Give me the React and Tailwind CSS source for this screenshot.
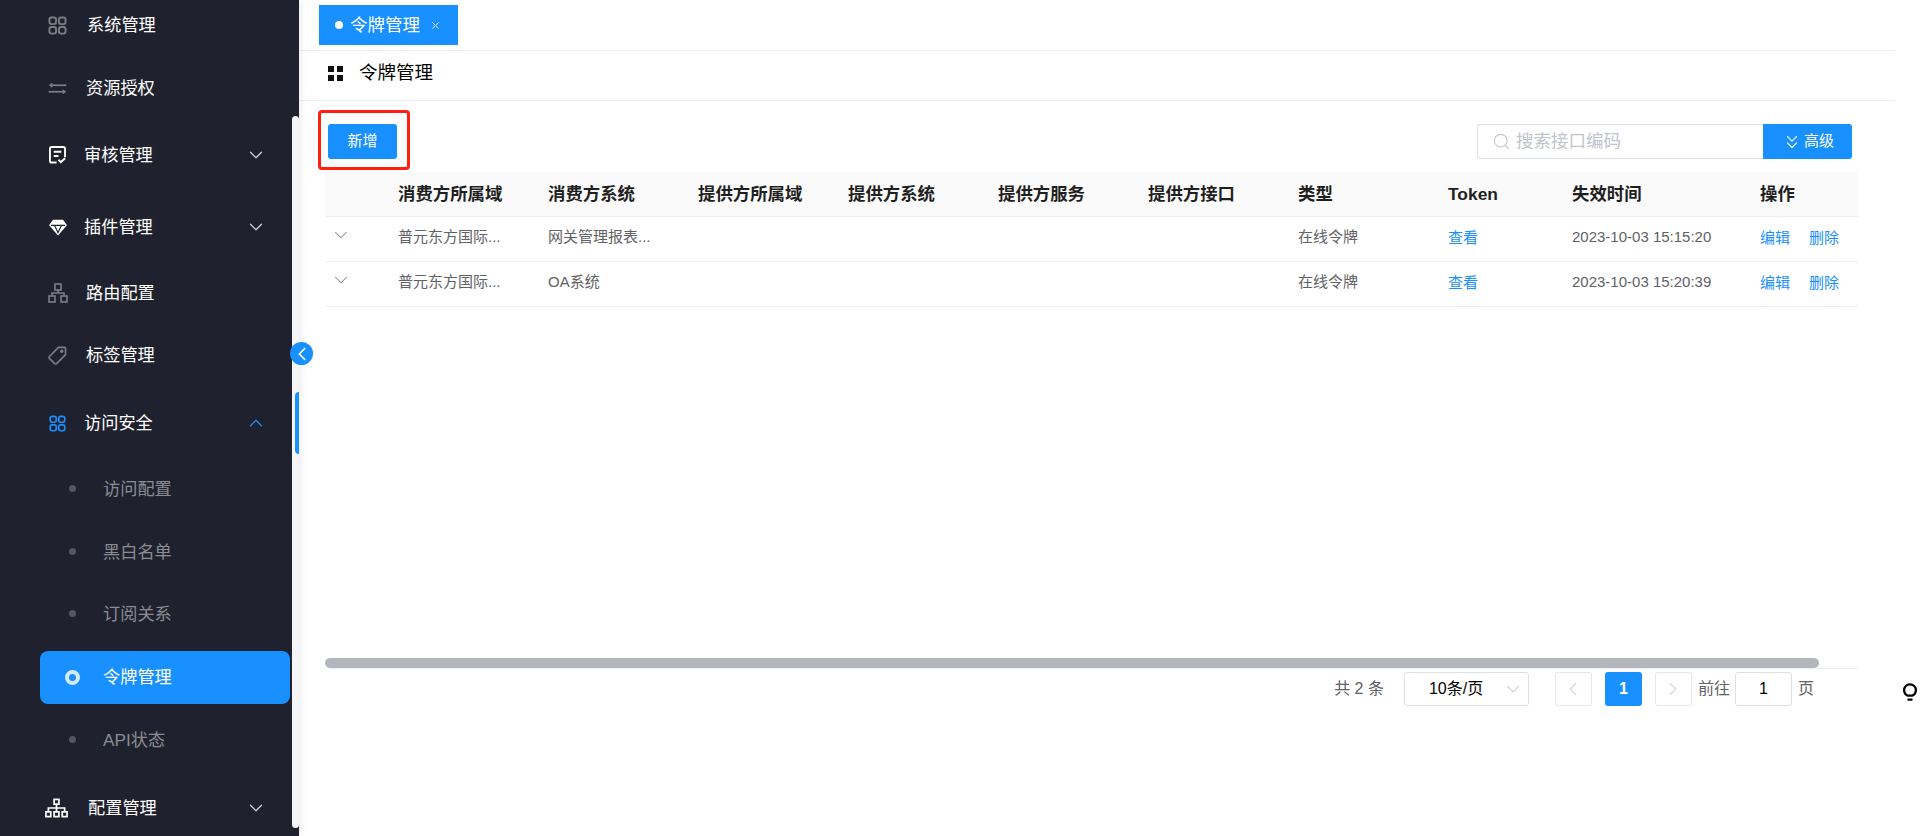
import { ChevronDown, ChevronLeft, ChevronRight, ChevronUp, ChevronsDown, Search, X } from 'lucide-react';

const font = { fontFamily: '"Liberation Sans", "Noto Sans CJK SC", sans-serif' };

const GridIcon = ({ className }) => (
  <svg viewBox="0 0 20 20" className={className} fill="none" stroke="currentColor" strokeWidth="2">
    <rect x="1.5" y="1.5" width="7" height="7" rx="2.2" />
    <rect x="11.5" y="1.5" width="7" height="7" rx="2.2" />
    <rect x="1.5" y="11.5" width="7" height="7" rx="2.2" />
    <rect x="11.5" y="11.5" width="7" height="7" rx="2.2" />
  </svg>
);

const SwapIcon = ({ className }) => (
  <svg viewBox="0 0 20 14" className={className} fill="currentColor">
    <rect x="3" y="2.6" width="16.5" height="1.8" />
    <path d="M0.5 3.5L4.5 0.8V6.2z" />
    <rect x="0.5" y="9.6" width="16.5" height="1.8" />
    <path d="M19.5 10.5L15.5 7.8V13.2z" />
  </svg>
);

const AuditIcon = ({ className }) => (
  <svg viewBox="0 0 18 19" className={className} fill="none" stroke="currentColor" strokeWidth="2">
    <path d="M8 17.5H3a2 2 0 0 1-2-2V3a2 2 0 0 1 2-2h12a2 2 0 0 1 2 2v9" />
    <path d="M5 6h8M5 10.5h5" />
    <path d="M10 14.5l2.5 2.5 4.5-4" />
  </svg>
);

const DiamondIcon = ({ className }) => (
  <svg viewBox="0 0 18 17" className={className}>
    <path d="M4 .8h10l4 5.4L9 16.4 0 6.2z" fill="currentColor" />
    <path d="M2 6.4h14M5.6 6.4L9 13.6l3.4-7.2" fill="none" stroke="#1f222e" strokeWidth="1.1" />
  </svg>
);

const TreeIcon = ({ className }) => (
  <svg viewBox="0 0 20 20" className={className} fill="none" stroke="currentColor" strokeWidth="1.6">
    <rect x="7" y="1" width="6" height="6" />
    <rect x="1" y="13" width="6" height="6" />
    <rect x="13" y="13" width="6" height="6" />
    <path d="M10 7v3M4 13v-3h12v3" />
  </svg>
);

const TagIcon = ({ className }) => (
  <svg viewBox="0 0 20 20" className={className} fill="none" stroke="currentColor" strokeWidth="1.7">
    <path d="M18.5 3v6L9 18.5a1.5 1.5 0 0 1-2 0L1.5 13a1.5 1.5 0 0 1 0-2L11 1.5h6A1.5 1.5 0 0 1 18.5 3z" />
    <circle cx="14.5" cy="5.5" r="1" />
  </svg>
);

const OrgIcon = ({ className }) => (
  <svg viewBox="0 0 24 20" className={className} fill="none" stroke="currentColor" strokeWidth="1.8">
    <rect x="9.5" y="1" width="5" height="5" />
    <rect x="1" y="14" width="5" height="5" />
    <rect x="9.5" y="14" width="5" height="5" />
    <rect x="18" y="14" width="5" height="5" />
    <path d="M12 6v8M3.5 14v-4h17v4" />
  </svg>
);

const BulbIcon = ({ className }) => (
  <svg viewBox="0 0 14 18" className={className} fill="none" stroke="currentColor" strokeWidth="2.2">
    <path d="M4.5 12.6C2.4 11.6 1.1 9.6 1.1 7.2a5.9 5.9 0 0 1 11.8 0c0 2.4-1.3 4.4-3.4 5.4z" />
    <path d="M4.5 16.6h5" />
  </svg>
);

const menu = [
  { label: '系统管理', icon: <GridIcon className="w-[19px] h-[19px] text-[#7c7e85]" />, rowCls: '-mt-[6px]', textCls: 'ml-[19px]' },
  { label: '资源授权', icon: <SwapIcon className="w-[19px] h-[13px] text-[#7c7e85]" />, rowCls: 'mt-[1px]', textCls: 'ml-[18px]' },
  { label: '审核管理', icon: <AuditIcon className="w-[17px] h-[18px] text-white" />, rowCls: 'mt-[5px]', textCls: 'ml-[16px]', arrow: 'down' },
  { label: '插件管理', icon: <DiamondIcon className="w-[18px] h-[17px] text-white" />, rowCls: 'mt-[10px]', textCls: 'ml-[16px]', arrow: 'down' },
  { label: '路由配置', icon: <TreeIcon className="w-[20px] h-[20px] text-[#7c7e85]" />, rowCls: 'mt-[4px]', textCls: 'ml-[18px]' },
  { label: '标签管理', icon: <TagIcon className="w-[19px] h-[19px] text-[#7c7e85]" />, rowCls: '', textCls: 'ml-[18px]' },
  { label: '访问安全', icon: <GridIcon className="w-[17px] h-[17px] text-[#1890ff]" />, rowCls: 'mt-[6px]', textCls: 'ml-[16px]', arrow: 'up' },
];

const subMenu = [
  { label: '访问配置', rowCls: 'mt-[4px]' },
  { label: '黑白名单', rowCls: 'mt-[1px]' },
  { label: '订阅关系', rowCls: '' },
  { label: '令牌管理', rowCls: 'mt-[1px]', active: true },
  { label: 'API状态', rowCls: 'mt-[1px]' },
];

const columns = ['消费方所属域', '消费方系统', '提供方所属域', '提供方系统', '提供方服务', '提供方接口', '类型', 'Token', '失效时间', '操作'];

const rows = [
  { owner: '普元东方国际...', system: '网关管理报表...', time: '2023-10-03 15:15:20' },
  { owner: '普元东方国际...', system: 'OA系统', time: '2023-10-03 15:20:39' },
];

const MenuRow = ({ item }) => (
  <div className={`flex items-center h-[62px] shrink-0 pl-[47px] text-[17.2px] text-white ${item.rowCls}`}>
    <div className="w-[21px] flex items-center justify-center shrink-0">{item.icon}</div>
    <span className={`${item.textCls} pt-[1px] whitespace-nowrap`}>{item.label}</span>
    {item.arrow === 'down' && <ChevronDown className="ml-auto mr-[32px] text-[#d7d8db]" size={22} strokeWidth={1.3} />}
    {item.arrow === 'up' && <ChevronUp className="ml-auto mr-[32px] text-[#1890ff]" size={22} strokeWidth={1.3} />}
  </div>
);

const SubRow = ({ item }) => (
  <div className={`flex items-center h-[62px] shrink-0 ${item.rowCls}`}>
    {item.active ? (
      <div className="ml-[40px] w-[250px] h-[53px] rounded-lg bg-[#1890ff] flex items-center text-[17.2px] text-white">
        <div className="ml-[25px] w-[15px] h-[15px] rounded-full border-[4px] border-[#d6eaff]" />
        <span className="ml-[23px] pt-[1px]">{item.label}</span>
      </div>
    ) : (
      <div className="flex items-center text-[17.2px] text-[#8b8d93]">
        <div className="ml-[69px] w-[7px] h-[7px] rounded-full bg-[#55565e]" />
        <span className="ml-[27px] pt-[1px]">{item.label}</span>
      </div>
    )}
  </div>
);

const Sidebar = () => (
  <aside className="relative w-[299px] shrink-0 h-full bg-[#1f222e] shadow-[2px_0_6px_rgba(0,0,0,0.08)] z-10">
    <div className="flex flex-col h-full overflow-hidden">
      {menu.map((item) => <MenuRow key={item.label} item={item} />)}
      {subMenu.map((item) => <SubRow key={item.label} item={item} />)}
      <MenuRow item={{ label: '配置管理', icon: <OrgIcon className="w-[24px] h-[20px] -ml-[2px] text-white" />, rowCls: 'mt-[6px]', textCls: 'ml-[20px]', arrow: 'down' }} />
    </div>
    {/* overlay scrollbar + collapse button */}
    <div className="absolute left-[292px] top-[116px] w-[7px] h-[712px] rounded-t-md rounded-b-md bg-[#f5f5f7]" />
    <div className="absolute left-[295px] top-[392px] w-[4px] h-[62px] rounded-l-md bg-[#1890ff]" />
    <div className="absolute left-[290px] top-[342px] w-[23px] h-[23px] rounded-full bg-[#1890ff] flex items-center justify-center">
      <ChevronLeft className="text-white" size={22} strokeWidth={1.8} />
    </div>
  </aside>
);

const Toolbar = () => (
  <div className="relative flex items-start justify-between h-[71px] pt-[23px] pl-[29px] pr-[43px]">
    <button className="w-[69px] h-[35px] rounded-[3px] bg-[#1890ff] text-white text-[15px]">新增</button>
    {/* red annotation around the button */}
    <div className="absolute left-[19px] top-[9px] w-[92px] h-[60px] rounded-[4px] border-[3px] border-[#fe1f10]" />
    <div className="flex h-[35px]">
      <div className="w-[286px] flex items-center pl-[14px] border border-r-0 border-[#dcdfe6] rounded-l-[3px] text-[#c0c4cc]">
        <Search size={19} strokeWidth={1.3} />
        <span className="ml-[5px] text-[17.5px]">搜索接口编码</span>
      </div>
      <button className="w-[89px] flex items-center justify-center gap-[1px] rounded-r-[3px] bg-[#1890ff] text-white text-[15px]">
        <ChevronsDown size={22} strokeWidth={1.2} />
        高级
      </button>
    </div>
  </div>
);

const TokenTable = () => (
  <div className="ml-[26px] mr-[37px] h-[497px] flex flex-col justify-between border-b border-[#ebeef5]">
    <table className="w-full table-fixed border-collapse">
      <colgroup>
        <col className="w-[63px]" />
        <col className="w-[150px]" />
        <col className="w-[150px]" />
        <col className="w-[150px]" />
        <col className="w-[150px]" />
        <col className="w-[150px]" />
        <col className="w-[150px]" />
        <col className="w-[150px]" />
        <col className="w-[124px]" />
        <col className="w-[188px]" />
        <col />
      </colgroup>
      <thead>
        <tr className="h-[44px] bg-[#fafafa] border-b border-[#ebeef5] text-[17.4px] font-bold text-[#1f1f1f]">
          <th />
          {columns.map((c) => <th key={c} className="px-[10px] text-left whitespace-nowrap">{c}</th>)}
        </tr>
      </thead>
      <tbody className="text-[15px] text-[#606266]">
        {rows.map((r) => (
          <tr key={r.time} className="h-[45px] border-b border-[#ebeef5]">
            <td className="pl-[5px] pb-[8px]"><ChevronDown className="text-[#85878c]" size={22} strokeWidth={1.1} /></td>
            <td className="px-[10px] pb-[2px] whitespace-nowrap">{r.owner}</td>
            <td className="px-[10px] pb-[2px] whitespace-nowrap">{r.system}</td>
            <td />
            <td />
            <td />
            <td />
            <td className="px-[10px] pb-[2px]">在线令牌</td>
            <td className="px-[10px] text-[#1890ff]">查看</td>
            <td className="px-[10px] pb-[2px] whitespace-nowrap">{r.time}</td>
            <td className="px-[10px] text-[#1890ff] whitespace-nowrap">
              <span>编辑</span>
              <span className="ml-[19px]">删除</span>
            </td>
          </tr>
        ))}
      </tbody>
    </table>
    <div className="w-[1494px] h-[10px] rounded-full bg-[#b5b6bb]" />
  </div>
);

const Pagination = () => (
  <div className="flex items-center justify-end h-[34px] mt-[3px] pr-[81px] text-[16px] text-[#606266]">
    <span>共 2 条</span>
    <div className="ml-[20px] w-[125px] h-full flex items-center justify-between pl-[24px] pr-[4px] border border-[#dcdfe6] rounded-[3px] text-black">
      10条/页
      <ChevronDown className="text-[#c0c4cc]" size={22} strokeWidth={1.1} />
    </div>
    <div className="ml-[26px] w-[37px] h-full flex items-center justify-center border border-[#e4e7ed] rounded-[3px] text-[#d5d9e3]">
      <ChevronLeft size={22} strokeWidth={1.4} />
    </div>
    <div className="ml-[13px] w-[37px] h-full flex items-center justify-center rounded-[3px] bg-[#1890ff] text-white font-bold">1</div>
    <div className="ml-[13px] w-[37px] h-full flex items-center justify-center border border-[#e4e7ed] rounded-[3px] text-[#d5d9e3]">
      <ChevronRight size={22} strokeWidth={1.4} />
    </div>
    <span className="ml-[6px]">前往</span>
    <div className="ml-[5px] w-[57px] h-full flex items-center justify-center border border-[#dcdfe6] rounded-[3px] text-black">1</div>
    <span className="ml-[6px]">页</span>
  </div>
);

export default function App() {
  return (
    <div className="relative flex h-screen w-full overflow-hidden bg-white" style={font}>
      <Sidebar />
      <main className="flex-1 min-w-0 pr-[25px]">
        <div className="h-[51px] flex items-start pl-[20px] pt-[5px] border-b border-[#ebeef5]">
          <div className="w-[139px] h-[40px] flex items-center bg-[#1890ff] text-white text-[17.5px]">
            <div className="ml-[16px] w-[8px] h-[8px] rounded-full bg-white" />
            <span className="ml-[7px]">令牌管理</span>
            <X className="ml-[10px]" size={11} strokeWidth={2} />
          </div>
        </div>
        <div className="h-[50px] flex items-center pl-[29px] border-b border-[#ebeef5] text-[18.5px] text-black">
          <div className="grid grid-cols-2 gap-[3px] w-[15px] h-[15px] -mt-[5px]">
            <div className="bg-[#111]" />
            <div className="bg-[#111]" />
            <div className="bg-[#111]" />
            <div className="bg-[#111]" />
          </div>
          <span className="ml-[16px] pb-[6px]">令牌管理</span>
        </div>
        <Toolbar />
        <TokenTable />
        <Pagination />
      </main>
      {/* floating hint button */}
      <BulbIcon className="absolute left-[1903px] top-[683px] w-[14px] h-[18px] text-black" />
    </div>
  );
}
